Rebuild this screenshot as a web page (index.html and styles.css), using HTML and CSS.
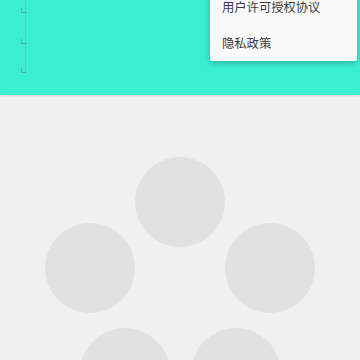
FILE: index.html
```html
<!DOCTYPE html>
<html lang="zh-CN">
<head>
  <meta charset="UTF-8">
  <meta name="viewport" content="width=device-width, initial-scale=1.0">
  <title>加载中</title>
  <link rel="stylesheet" href="styles.css">
</head>
<body>
  <div class="header">
    <div class="ruler">
      <span class="tick t1"></span>
      <span class="tick t2"></span>
      <span class="tick t3"></span>
    </div>
  </div>

  <!-- 下拉菜单 -->
  <div class="menu">
    <div class="menu-item">用户许可授权协议</div>
    <div class="menu-item">隐私政策</div>
  </div>

  <!-- 加载占位 -->
  <div class="loading">
    <span class="dot d1"></span>
    <span class="dot d2"></span>
    <span class="dot d3"></span>
    <span class="dot d4"></span>
    <span class="dot d5"></span>
  </div>
</body>
</html>
```

FILE: styles.css
```css
/* 通用 */
body {
  margin: 0;
  padding: 0;
  background: #f0f0f0;
  font-family: "Noto Sans CJK SC", "Noto Sans", sans-serif;
  overflow: hidden;
  height: 360px;
  position: relative;
}
.header {
  height: 95px;
  background: #3aeed2;
  box-shadow: 0 1px 2px rgba(0,0,0,0.12);
  position: relative;
}
/* 左侧刻度 */
.ruler {
  position: absolute;
  left: 25px;
  top: 0;
  width: 1px;
  height: 72px;
  background: rgba(120,160,150,0.35);
}
.tick {
  position: absolute;
  left: -4px;
  width: 4px;
  height: 4px;
  border-left: 1px solid rgba(90,130,120,0.55);
  border-bottom: 1px solid rgba(90,130,120,0.55);
}
.t1 { top: 8px; }
.t2 { top: 39px; }
.t3 { top: 68px; }
/* 菜单 */
.menu {
  position: absolute;
  top: -11px;
  left: 210px;
  width: 147px;
  background: #fafafa;
  border-radius: 2px;
  box-shadow: 0 2px 6px rgba(0,0,0,0.25);
  z-index: 10;
}
.menu-item {
  height: 36px;
  line-height: 36px;
  padding-left: 12px;
  font-size: 12.3px;
  color: #3a3a3a;
  white-space: nowrap;
}
/* 加载圆点 */
.loading {
  position: relative;
  height: 265px;
  overflow: hidden;
}
.dot {
  position: absolute;
  width: 90px;
  height: 90px;
  border-radius: 50%;
  background: #e1e1e1;
}
.d1 { left: 135px; top: 62px; }
.d2 { left: 45px; top: 128px; }
.d3 { left: 225px; top: 128px; }
.d4 { left: 80px; top: 233px; }
.d5 { left: 191px; top: 233px; }
```
